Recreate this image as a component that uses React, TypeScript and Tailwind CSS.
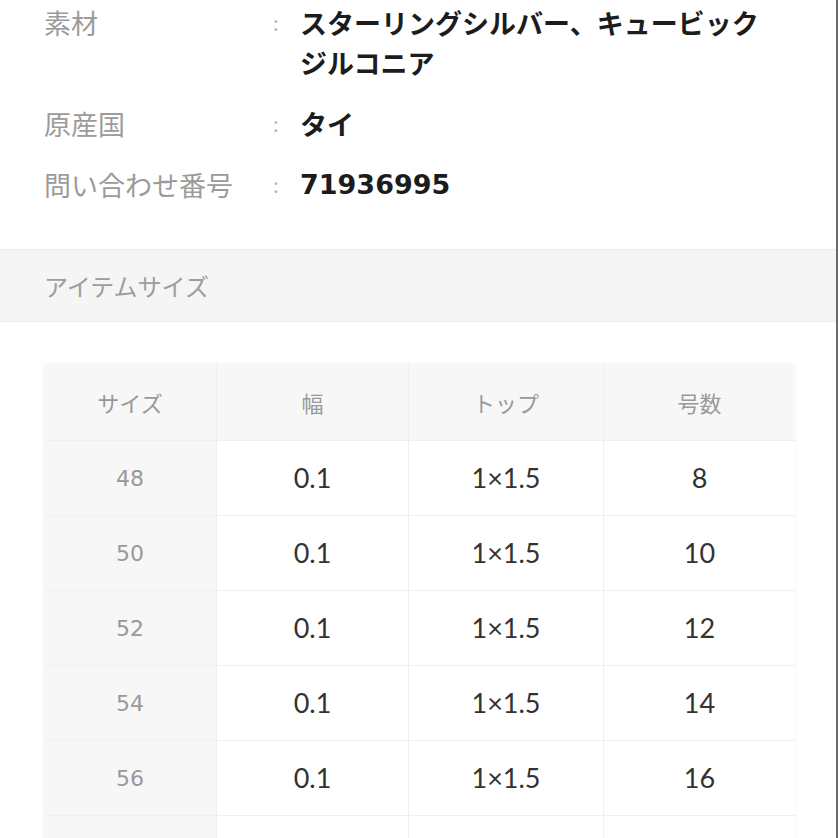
const JP = "font-['Noto_Sans_CJK_JP',sans-serif]";

const specs = [
  { label: "素材", value: ["スターリングシルバー、キュービック", "ジルコニア"], num: false },
  { label: "原産国", value: ["タイ"], num: false },
  { label: "問い合わせ番号", value: ["71936995"], num: true },
];

const rows = [
  { size: "48", width: "0.1", top: "1×1.5", no: "8" },
  { size: "50", width: "0.1", top: "1×1.5", no: "10" },
  { size: "52", width: "0.1", top: "1×1.5", no: "12" },
  { size: "54", width: "0.1", top: "1×1.5", no: "14" },
  { size: "56", width: "0.1", top: "1×1.5", no: "16" },
  { size: "58", width: "0.1", top: "1×1.5", no: "18" },
];

function SpecList() {
  return (
    <div className="grid grid-cols-[229px_27px_1fr] gap-y-[21px] pl-[44px] pt-[3px]">
      {specs.map((s) => (
        <div key={s.label} className="contents">
          <div className={`${JP} text-[27px] leading-[40px] text-[#9b9b9b]`}>{s.label}</div>
          <div className={`${JP} text-[20px] leading-[40px] text-[#b5b5b5]`}>:</div>
          <div
            className={`text-[27px] leading-[40px] font-bold text-[#1c1c1c] ${
              s.num ? "font-['DejaVu_Sans',sans-serif]" : JP
            }`}
          >
            {s.value.map((line, i) => (
              <div key={i}>{line}</div>
            ))}
          </div>
        </div>
      ))}
    </div>
  );
}

function SizeTable() {
  const head = "flex items-center justify-center bg-[#f7f7f7] text-[#999]";
  const cell = "flex items-center justify-center bg-white font-['Lato',sans-serif] text-[27px] text-[#333]";
  return (
    <div className="ml-[44px] w-[751px] shadow-[0_0_4px_rgba(0,0,0,0.05)]">
      <div className="grid grid-cols-[172px_191px_194px_191px] auto-rows-[74px] grid-rows-[76px] gap-px bg-[#efefef]">
        <div className={`${head} ${JP} text-[22px]`}>サイズ</div>
        <div className={`${head} ${JP} text-[22px]`}>幅</div>
        <div className={`${head} ${JP} text-[22px]`}>トップ</div>
        <div className={`${head} ${JP} text-[22px]`}>号数</div>
        {rows.map((r) => (
          <div key={r.size} className="contents">
            <div className={`${head} font-['DejaVu_Sans',sans-serif] text-[22px]`}>{r.size}</div>
            <div className={cell}>{r.width}</div>
            <div className={cell}>{r.top}</div>
            <div className={cell}>{r.no}</div>
          </div>
        ))}
      </div>
    </div>
  );
}

export default function App() {
  return (
    <div className="h-[838px] w-[838px] overflow-hidden border-r-2 border-[#6a6a6a] bg-white">
      <SpecList />
      <div className="mt-[44px] flex h-[73px] items-center border-y border-[#ececec] bg-[#f5f5f5] pl-[44px]">
        <span className={`${JP} text-[24px] text-[#9d9d9d]`}>アイテムサイズ</span>
      </div>
      <div className="pt-[42px]">
        <SizeTable />
      </div>
    </div>
  );
}
